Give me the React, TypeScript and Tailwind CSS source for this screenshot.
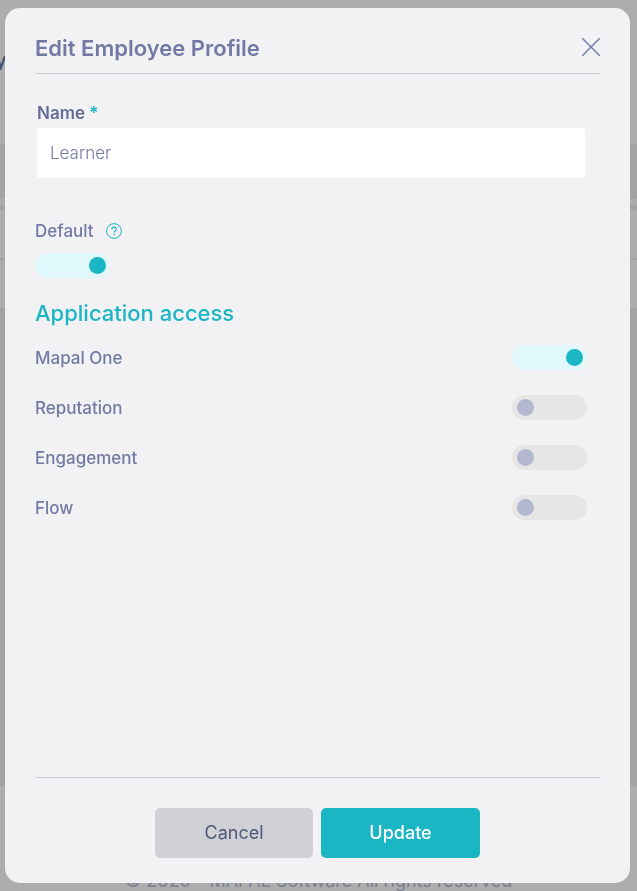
import { useState } from "react";

type App = {
  id: string;
  label: string;
  enabled: boolean;
};

const initialApps: App[] = [
  { id: "mapal-one", label: "Mapal One", enabled: true },
  { id: "reputation", label: "Reputation", enabled: false },
  { id: "engagement", label: "Engagement", enabled: false },
  { id: "flow", label: "Flow", enabled: false },
];

type SwitchProps = {
  id: string;
  checked: boolean;
  onChange: (checked: boolean) => void;
};

function Switch({ id, checked, onChange }: SwitchProps) {
  return (
    <span className="flex h-[25px] w-[75px] shrink-0">
      <input
        id={id}
        type="checkbox"
        role="switch"
        checked={checked}
        onChange={(event) => onChange(event.target.checked)}
        className="flex h-full w-full cursor-pointer appearance-none items-center rounded-full bg-[#e6e6e6] pr-1 pl-[5px] before:h-[17px] before:w-[17px] before:rounded-full before:bg-[#b4b7d0] checked:justify-end checked:bg-[#e0f8fb] checked:before:bg-[#1ab6c4]"
      />
    </span>
  );
}

function HelpIcon() {
  return (
    <svg viewBox="0 0 16 16" className="h-4 w-4" fill="none" stroke="#1ab6c4">
      <circle cx="8" cy="8" r="7.4" strokeWidth="1" />
      <path
        d="M5.8 6.4C5.8 4.9 6.8 4.1 8.1 4.1s2.3.8 2.3 2c0 1.6-2.2 1.7-2.2 3.5"
        strokeWidth="1.1"
      />
      <path d="M8.2 10.6v1.3" strokeWidth="1.2" />
    </svg>
  );
}

function PageBackdrop() {
  return (
    <div
      aria-hidden="true"
      className="flex h-screen flex-col overflow-hidden bg-[#adadad]"
    >
      <div className="h-36 shrink-0 pt-[46px] text-xl font-semibold text-[#4c5272]">
        <span className="-ml-[5px]">y</span>
      </div>
      <div className="h-[55px] shrink-0 bg-[#a3a3a5]" />
      <div className="mt-[6px] h-[5px] shrink-0 bg-[#a3a3a5]" />
      <div className="h-12 shrink-0" />
      <div className="h-[2px] shrink-0 bg-[#a3a3a5]" />
      <div className="h-12 shrink-0" />
      <div className="grow bg-[#a3a3a5]" />
      <footer className="flex h-[105px] shrink-0 items-end justify-center text-lg leading-5 whitespace-nowrap text-[#7b7f8e]">
        © 2020 - MAPAL Software All rights reserved
      </footer>
    </div>
  );
}

export default function App() {
  const [name, setName] = useState("Learner");
  const [isDefault, setIsDefault] = useState(true);
  const [apps, setApps] = useState(initialApps);

  const toggleApp = (id: string, enabled: boolean) => {
    setApps((current) =>
      current.map((app) => (app.id === id ? { ...app, enabled } : app)),
    );
  };

  return (
    <div className="font-[Inter,'Open_Sans',sans-serif]">
      <PageBackdrop />

      <div className="fixed inset-0 flex py-2 pr-[7px] pl-[5px]">
        <form
          role="dialog"
          aria-labelledby="dialog-title"
          onSubmit={(event) => event.preventDefault()}
          className="flex grow flex-col overflow-auto rounded-[15px] bg-[#f2f2f4] px-[30px] pt-6 pb-[25px] text-[17px] font-medium text-[#727aa3]"
        >
          <header className="flex h-[42px] items-start justify-between border-b border-[#cfcfd4]">
            <h1 id="dialog-title" className="text-[22px] leading-8 font-semibold">
              Edit Employee Profile
            </h1>
            <button type="button" aria-label="Close" className="mt-[6px]">
              <svg
                viewBox="0 0 18 18"
                className="h-[18px] w-[18px]"
                stroke="#7180ad"
                strokeWidth="1.5"
              >
                <path d="M0 0l18 18M18 0L0 18" />
              </svg>
            </button>
          </header>

          <div className="mt-[27px] mr-[15px] ml-[2px]">
            <label
              htmlFor="name"
              className="block leading-6 font-semibold text-[#656d97]"
            >
              Name <span className="text-[#1ab6c4]">*</span>
            </label>
            <input
              id="name"
              type="text"
              required
              value={name}
              onChange={(event) => setName(event.target.value)}
              className="mt-[3px] block h-[50px] w-full rounded-[3px] bg-white px-[13px] font-light outline-none"
            />
          </div>

          <div className="mt-[41px]">
            <div className="flex h-6 items-center gap-3">
              <label htmlFor="default" className="leading-6">
                Default
              </label>
              <button type="button" aria-label="About the default profile">
                <HelpIcon />
              </button>
            </div>
            <div className="mt-[10px]">
              <Switch
                id="default"
                checked={isDefault}
                onChange={setIsDefault}
              />
            </div>
          </div>

          <h2 className="mt-[19px] text-[22px] leading-8 font-medium text-[#1ab6c4]">
            Application access
          </h2>

          <ul className="mt-4 mr-[13px] flex flex-col gap-[25px]">
            {apps.map((app) => (
              <li
                key={app.id}
                className="flex h-[25px] items-start justify-between"
              >
                <label htmlFor={app.id} className="leading-[26px]">
                  {app.label}
                </label>
                <Switch
                  id={app.id}
                  checked={app.enabled}
                  onChange={(enabled) => toggleApp(app.id, enabled)}
                />
              </li>
            ))}
          </ul>

          <footer className="mt-auto flex justify-center gap-2 border-t border-[#cfcfdc] pt-[30px] text-lg">
            <button
              type="button"
              className="h-[50px] w-[158px] rounded-[5px] bg-[#d1d0d7] font-normal text-[#4f5878]"
            >
              Cancel
            </button>
            <button
              type="submit"
              className="h-[50px] w-[159px] rounded-[5px] bg-[#1ab6c4] font-medium text-white"
            >
              Update
            </button>
          </footer>
        </form>
      </div>
    </div>
  );
}
